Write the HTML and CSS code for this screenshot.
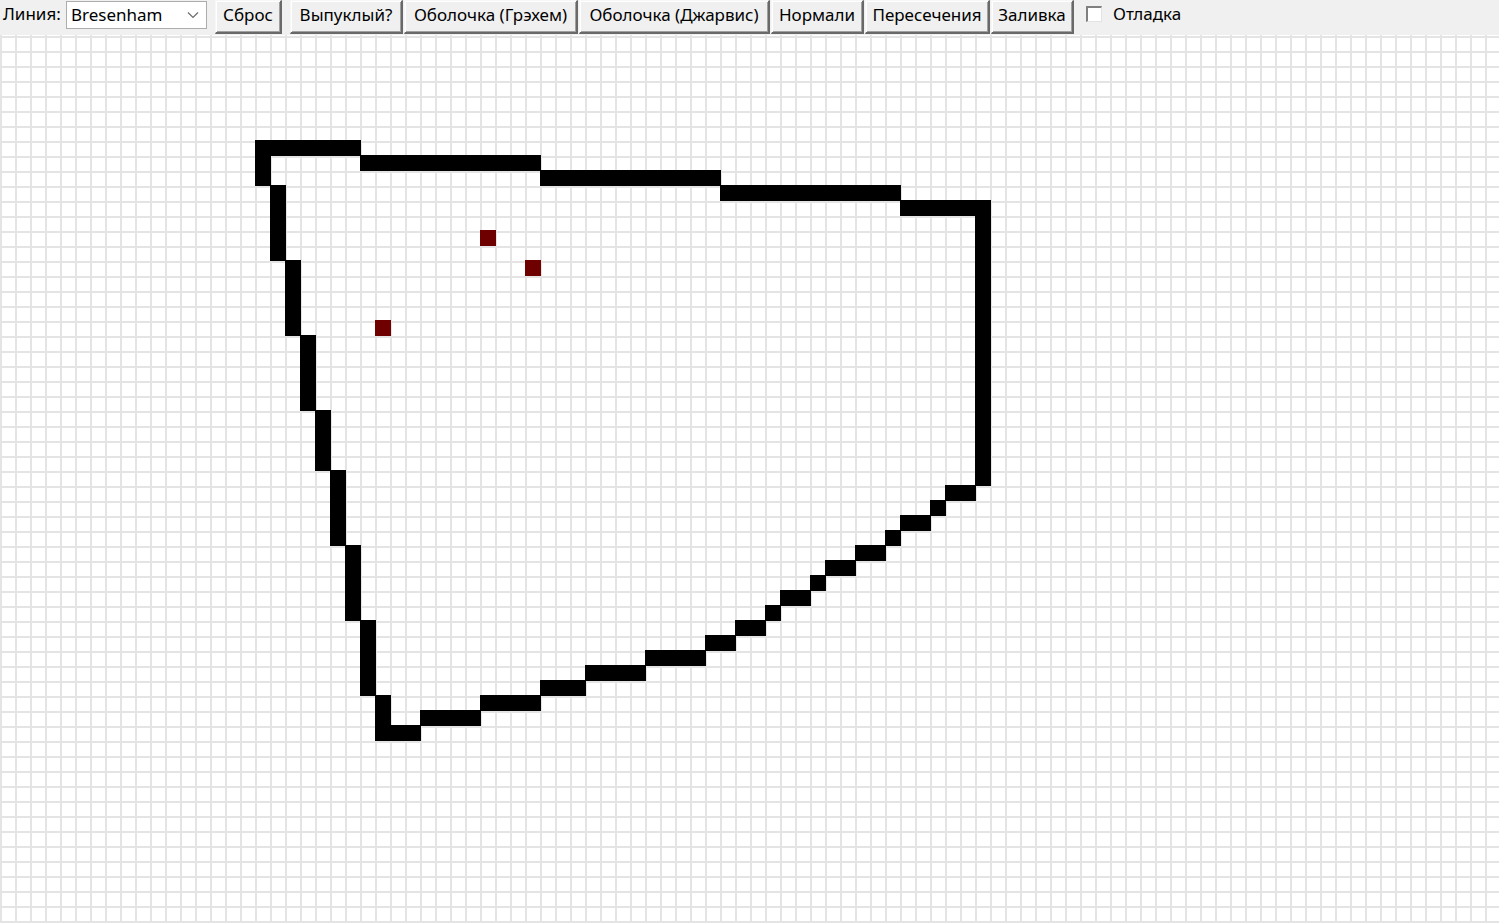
FILE: index.html
```html
<!DOCTYPE html>
<html lang="ru">
<head>
<meta charset="utf-8">
<title>Растеризация</title>
<link rel="stylesheet" href="styles.css">
</head>
<body>
<div class="toolbar">
  <span class="label">Линия:</span>
  <div class="select"><span class="select-text">Bresenham</span>
    <svg class="chev" width="12" height="8" viewBox="0 0 12 8"><path d="M1 1.5 L6 6.5 L11 1.5" fill="none" stroke="#6d6d6d" stroke-width="1.2"/></svg>
  </div>
  <button class="btn b-reset">Сброс</button>
  <button class="btn b-convex">Выпуклый?</button>
  <button class="btn b-graham">Оболочка (Грэхем)</button>
  <button class="btn b-jarvis">Оболочка (Джарвис)</button>
  <button class="btn b-norm">Нормали</button>
  <button class="btn b-inter">Пересечения</button>
  <button class="btn b-fill">Заливка</button>
  <label class="check"><span class="box"></span><span class="check-text">Отладка</span></label>
</div>
<div class="canvas">
  <svg class="pixels" width="1499" height="888" viewBox="0 0 1499 888">
    <g fill="#000">
      <!-- top edge -->
      <rect x="255" y="105" width="106" height="16"/>
      <rect x="360" y="120" width="181" height="16"/>
      <rect x="540" y="135" width="181" height="16"/>
      <rect x="720" y="150" width="181" height="16"/>
      <rect x="900" y="165" width="91" height="16"/>
      <!-- right edge -->
      <rect x="975" y="180" width="16" height="271"/>
      <!-- lower edge -->
      <rect x="945" y="450" width="31" height="16"/>
      <rect x="930" y="465" width="16" height="16"/>
      <rect x="900" y="480" width="31" height="16"/>
      <rect x="885" y="495" width="16" height="16"/>
      <rect x="855" y="510" width="31" height="16"/>
      <rect x="825" y="525" width="31" height="16"/>
      <rect x="810" y="540" width="16" height="16"/>
      <rect x="780" y="555" width="31" height="16"/>
      <rect x="765" y="570" width="16" height="16"/>
      <rect x="735" y="585" width="31" height="16"/>
      <rect x="705" y="600" width="31" height="16"/>
      <rect x="645" y="615" width="61" height="16"/>
      <rect x="585" y="630" width="61" height="16"/>
      <rect x="540" y="645" width="46" height="16"/>
      <rect x="480" y="660" width="61" height="16"/>
      <rect x="420" y="675" width="61" height="16"/>
      <rect x="375" y="690" width="46" height="16"/>
      <!-- left edge -->
      <rect x="255" y="105" width="16" height="46"/>
      <rect x="270" y="150" width="16" height="76"/>
      <rect x="285" y="225" width="16" height="76"/>
      <rect x="300" y="300" width="16" height="76"/>
      <rect x="315" y="375" width="16" height="61"/>
      <rect x="330" y="435" width="16" height="76"/>
      <rect x="345" y="510" width="16" height="76"/>
      <rect x="360" y="585" width="16" height="76"/>
      <rect x="375" y="660" width="16" height="46"/>
    </g>
    <g fill="#6e0000">
      <rect x="480" y="195" width="16" height="16"/>
      <rect x="525" y="225" width="16" height="16"/>
      <rect x="375" y="285" width="16" height="16"/>
    </g>
  </svg>
</div>
</body>
</html>
```
FILE: styles.css
```css
html, body {
  margin: 0;
  padding: 0;
  background: #f0f0f0;
  overflow: hidden;
}
body {
  width: 1499px;
  height: 923px;
  display: flex;
  flex-direction: column;
  font-family: "Noto Sans", "Open Sans", sans-serif;
  font-size: 17px;
  color: #000;
}
.toolbar {
  height: 35px;
  flex: 0 0 35px;
  display: flex;
  align-items: flex-start;
  background: #f0f0f0;
}
.label {
  width: 59px;
  margin: 3px 4px 0 3px;
  line-height: 22px;
  white-space: nowrap;
}
.select {
  height: 28px;
  margin-top: 1px;
  border: 1px solid #adadad;
  background: #fff;
  display: flex;
  align-items: center;
  justify-content: space-between;
  padding: 0 7px 0 4px;
  box-sizing: border-box;
  width: 141px;
}
.select-text {
  line-height: 22px;
  margin-top: -1px;
}
.chev {
  display: block;
}
.btn {
  font: inherit;
  color: #000;
  height: 34px;
  padding: 0 0 3px 0;
  background: #f0f0f0;
  border-style: solid;
  border-width: 1px 2px 2px 1px;
  border-color: #f7f7f7 #696969 #696969 #f7f7f7;
  box-shadow: inset 1px 1px 0 #fff, inset -1px -1px 0 #a0a0a0;
  margin: 0;
  line-height: 22px;
  white-space: nowrap;
  text-align: center;
  box-sizing: border-box;
}
.b-reset { margin-left: 8px; width: 67px; }
.b-convex { margin-left: 8px; width: 113px; }
.b-graham { margin-left: 1px; width: 174px; }
.b-jarvis { margin-left: 1px; width: 191px; }
.b-norm { margin-left: 1px; width: 93px; }
.b-inter { margin-left: 1px; width: 125px; }
.b-fill { margin-left: 1px; width: 83px; }
.check {
  display: flex;
  align-items: center;
  margin: 4px 0 0 12px;
  height: 20px;
}
.box {
  width: 13px;
  height: 13px;
  background: #fff;
  border-style: solid;
  border-width: 2px 1px 1px 2px;
  border-color: #808080 #e3e3e3 #e3e3e3 #808080;
  margin-right: 11px;
}
.check-text {
  line-height: 20px;
  margin-top: 0;
}
.canvas {
  flex: 1 1 auto;
  background-color: #fff;
  background-image:
    linear-gradient(to right, #e4e4e4 2px, transparent 2px),
    linear-gradient(to bottom, #e4e4e4 2px, transparent 2px);
  background-size: 15px 15px;
  background-position: 0 1px;
  overflow: hidden;
}
.pixels {
  display: block;
}
```
